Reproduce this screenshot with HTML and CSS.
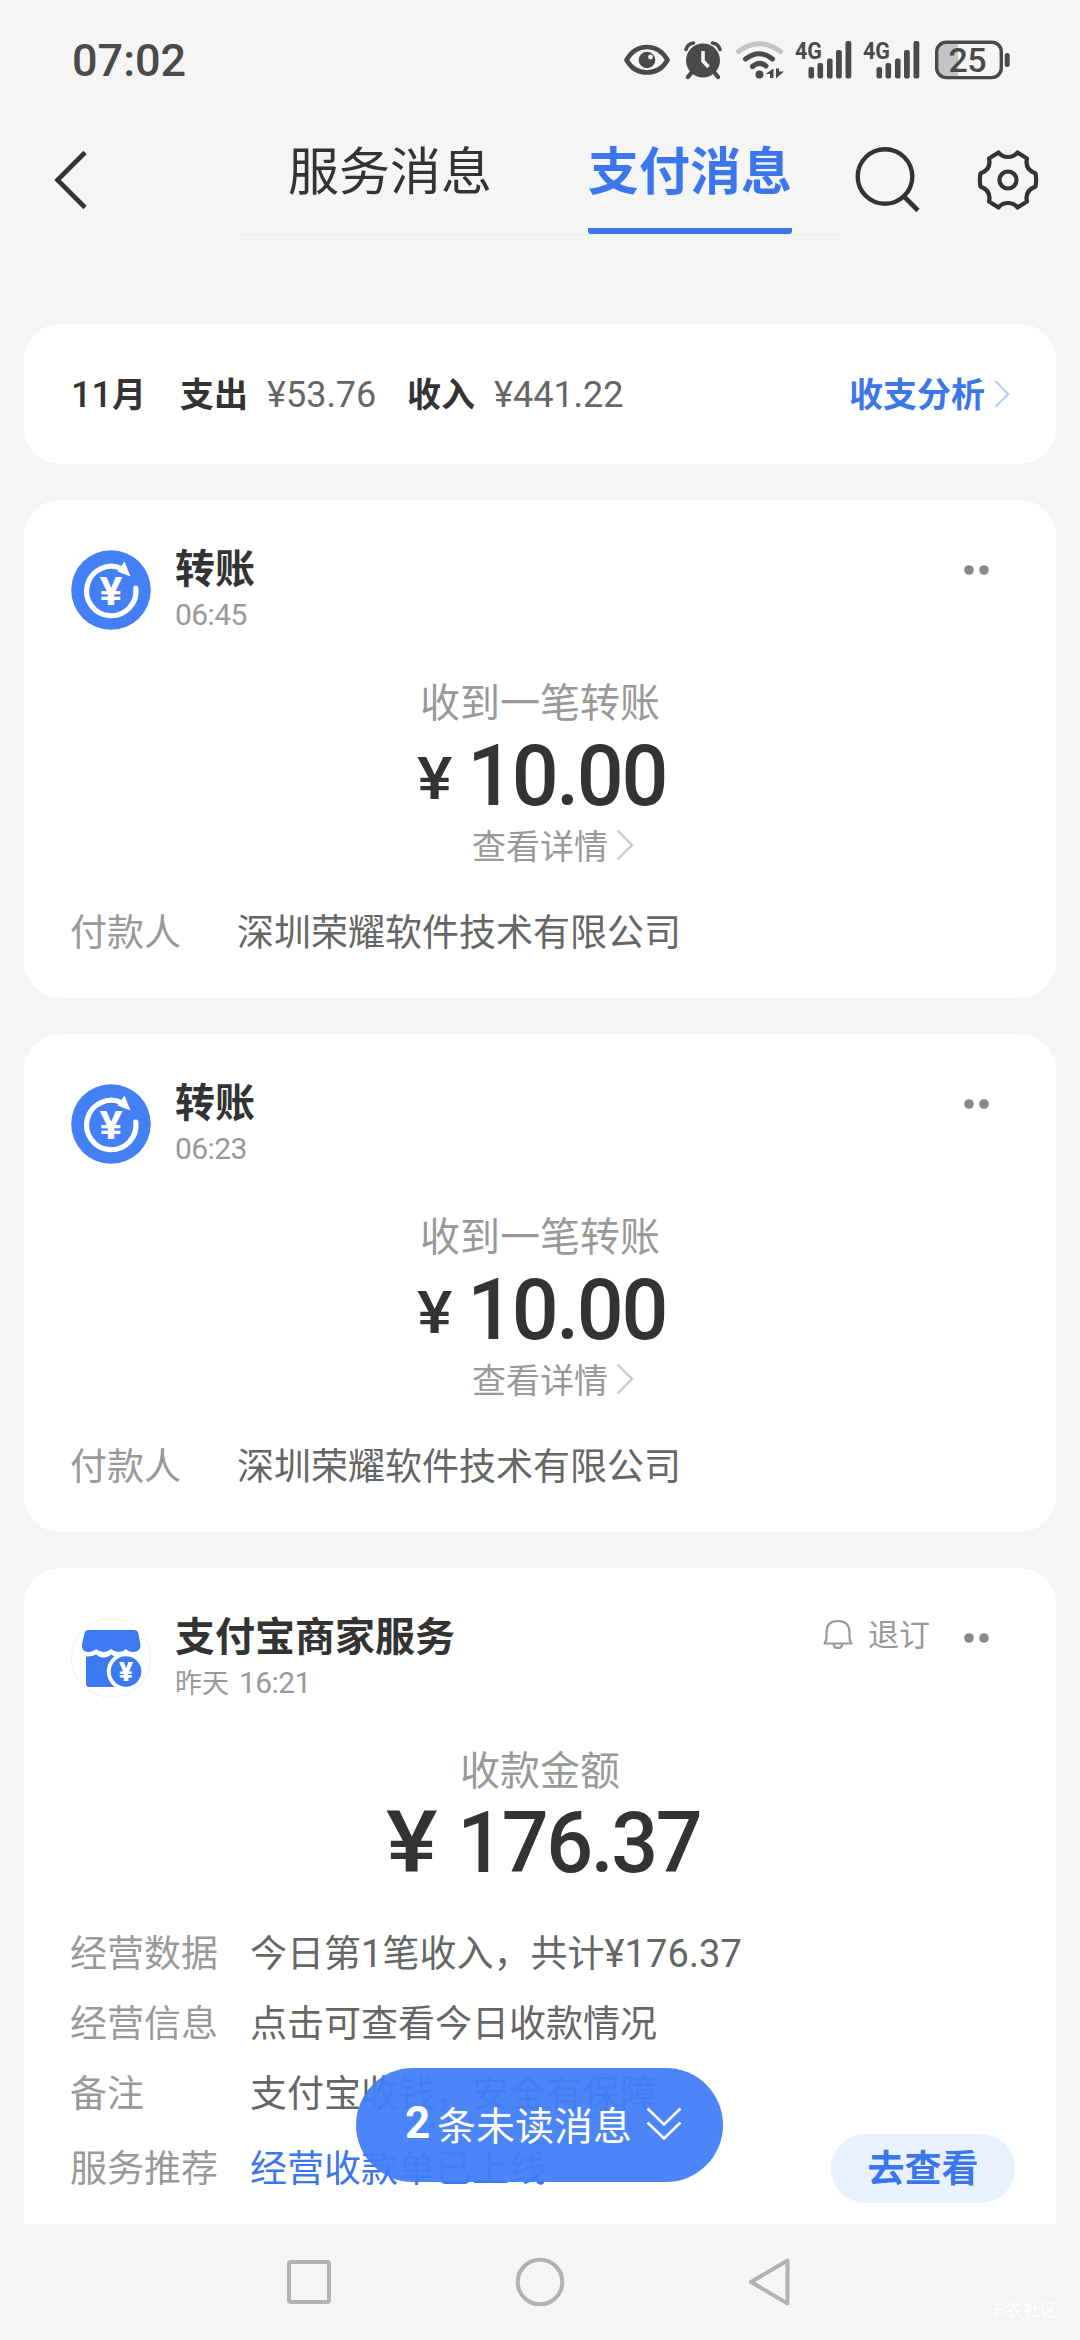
FILE: index.html
```html
<!DOCTYPE html>
<html lang="zh-CN">
<head>
<meta charset="utf-8">
<title>支付消息</title>
<link rel="stylesheet" href="styles.css">
</head>
<body>
<svg class="defs" width="0" height="0">
  <symbol id="signal" viewBox="0 0 57 40">
    <g fill="#4a4a4a">
      <rect x="13.5" y="27" width="5.6" height="11.5" rx="2"/>
      <rect x="22.5" y="23" width="5.6" height="15.5" rx="2"/>
      <rect x="32" y="18.500" width="5.600" height="20" rx="2"/>
      <rect x="41" y="10" width="5.800" height="28.500" rx="2"/>
      <rect x="50.500" y="1" width="5.800" height="37.500" rx="2"/>
    </g>
  </symbol>
  <symbol id="transfer" viewBox="0 0 80 80">
    <circle cx="40" cy="40" r="39.800" fill="#4380f5"/>
    <path d="M64.800 38A24.700 24.700 0 1 1 51 18.800" fill="none" stroke="#fff" stroke-width="5.200" stroke-linecap="round"/>
    <path d="M53.500 11.500L59.500 26.500L46.500 21.500Z" fill="#fff"/>
  </symbol>
  <symbol id="dots" viewBox="0 0 25 12">
    <circle cx="5" cy="6" r="4.800" fill="#888"/><circle cx="20" cy="6" r="4.800" fill="#888"/>
  </symbol>
  <symbol id="chevron" viewBox="0 0 18 32">
    <path d="M1.500 1.500L16 16L1.500 30.500" fill="none" stroke="currentColor" stroke-width="2.400"/>
  </symbol>
</svg>

<div class="screen">
  <header class="status">
    <span class="clock">07:02</span>
    <svg class="eye" width="46" height="32" viewBox="0 0 46 32">
      <path d="M2.500 16C7 8 14 3 23 3S39 8 43.500 16C39 24 32 28.500 23 28.500S7 24 2.500 16Z" fill="none" stroke="#4a4a4a" stroke-width="4.600" stroke-linejoin="round"/>
      <circle cx="23" cy="16" r="8.300" fill="#4a4a4a"/><circle cx="26.500" cy="13" r="2.400" fill="#f5f5f5"/>
    </svg>
    <svg class="alarm" width="38" height="38" viewBox="0 0 38 38">
      <circle cx="19" cy="19.500" r="17" fill="#4a4a4a"/>
      <path d="M2 8.500Q4 2.500 9.500 2M36 8.500Q34 2.500 28.500 2" fill="none" stroke="#4a4a4a" stroke-width="3.600" stroke-linecap="round"/>
      <path d="M8 31L4 36M30 31L34 36" stroke="#4a4a4a" stroke-width="4.400" stroke-linecap="round"/>
      <path d="M19 10V20L24.500 26" fill="none" stroke="#f5f5f5" stroke-width="3.600"/>
    </svg>
    <svg class="wifi" width="48" height="40" viewBox="0 0 48 40">
      <g fill="none" stroke-width="5" stroke-linecap="round">
        <path d="M2.500 11.500Q23.500-4 44.500 11.500" stroke="#c4c4c4"/>
        <path d="M9.500 19Q23.500 8.500 36.500 19" stroke="#4a4a4a"/>
        <path d="M16.500 26.500Q23.500 20.500 30 26" stroke="#4a4a4a"/>
      </g>
      <circle cx="23.500" cy="34.500" r="4" fill="#4a4a4a"/>
      <path d="M37.500 28.500V38H34V34H29.500ZM40 28.500H43V31.500H48L40 38.500Z" fill="#4a4a4a"/>
    </svg>
    <svg class="cell" width="57" height="40"><use href="#signal"/><text x="0" y="18.500" textLength="27" lengthAdjust="spacingAndGlyphs">4G</text></svg>
    <svg class="cell" width="57" height="40"><use href="#signal"/><text x="0" y="18.500" textLength="27" lengthAdjust="spacingAndGlyphs">4G</text></svg>
    <svg class="battery" width="77" height="40" viewBox="0 0 77 40">
      <path d="M12 2H23V37H12Q2 37 2 27V12Q2 2 12 2Z" fill="#c4c4c4"/>
      <rect x="1.700" y="2.200" width="64.600" height="35.400" rx="9.500" fill="none" stroke="#4a4a4a" stroke-width="3.400"/>
      <rect x="69.700" y="13" width="5" height="14" rx="2.500" fill="#4a4a4a"/>
      <text x="13.500" y="31.800" textLength="38">25</text>
    </svg>
  </header>

  <nav class="topbar">
    <svg class="back" width="36" height="60" viewBox="0 0 36 60"><path d="M32 2.500L4.500 30L32 57.500" fill="none" stroke="#333" stroke-width="4.600"/></svg>
    <div class="tabs">
      <div class="tab"><span>服务消息</span></div>
      <div class="tab active"><span>支付消息</span></div>
    </div>
    <svg class="search" width="66" height="68" viewBox="0 0 66 68">
      <circle cx="30" cy="30.500" r="27.300" fill="none" stroke="#333" stroke-width="4.400"/>
      <path d="M49 50.500L63 64.500" stroke="#333" stroke-width="4.600"/>
    </svg>
    <svg class="gear" width="62" height="62" viewBox="0 0 62 62">
      <path d="M12 9.500L21.500 3.500Q25 8 31 8T40.500 3.500L50 9.500C48 18 52 22 58.500 24.500Q59.800 31 58.500 37.500C52 40 48 44 50 52.500L40.500 58.500Q37 54 31 54T21.500 58.500L12 52.500C14 44 10 40 3.500 37.500Q2.200 31 3.500 24.500C10 22 14 18 12 9.500Z" fill="none" stroke="#333" stroke-width="4.200" stroke-linejoin="round"/>
      <circle cx="31" cy="31" r="8.500" fill="none" stroke="#333" stroke-width="4.200"/>
    </svg>
  </nav>

  <main class="feed">
    <section class="card summary">
      <b class="month"><span class="num">11</span>月</b>
      <b class="out">支出</b><span class="num sum">¥53.76</span>
      <b class="in">收入</b><span class="num sum">¥441.22</span>
      <a class="analysis"><span>收支分析</span><svg width="16" height="30"><use href="#chevron"/></svg></a>
    </section>

    <article class="card message">
      <div class="head">
        <svg class="avatar" width="80" height="80"><use href="#transfer"/><text x="28.500" y="55" textLength="23" lengthAdjust="spacingAndGlyphs">¥</text></svg>
        <div class="who"><h2>转账</h2><p><span class="num">06:45</span></p></div>
        <svg class="more" width="25" height="12"><use href="#dots"/></svg>
      </div>
      <p class="label">收到一笔转账</p>
      <p class="amount"><span class="yen small">¥</span><span class="digits">10.00</span></p>
      <p class="detail"><span>查看详情</span><svg width="18" height="32"><use href="#chevron"/></svg></p>
      <div class="row payer"><span class="key">付款人</span><span>深圳荣耀软件技术有限公司</span></div>
    </article>

    <article class="card message">
      <div class="head">
        <svg class="avatar" width="80" height="80"><use href="#transfer"/><text x="28.500" y="55" textLength="23" lengthAdjust="spacingAndGlyphs">¥</text></svg>
        <div class="who"><h2>转账</h2><p><span class="num">06:23</span></p></div>
        <svg class="more" width="25" height="12"><use href="#dots"/></svg>
      </div>
      <p class="label">收到一笔转账</p>
      <p class="amount"><span class="yen small">¥</span><span class="digits">10.00</span></p>
      <p class="detail"><span>查看详情</span><svg width="18" height="32"><use href="#chevron"/></svg></p>
      <div class="row payer"><span class="key">付款人</span><span>深圳荣耀软件技术有限公司</span></div>
    </article>

    <article class="card message merchant">
      <div class="head">
        <svg class="shop" width="80" height="80" viewBox="0 0 80 80">
          <circle cx="40" cy="40" r="39.500" fill="#fff" stroke="#f1f1f1"/>
          <path d="M17.500 12H63.500Q66.500 12 67.300 15L69.500 27Q69.500 34 62 34Q57.500 34 55 31Q51.500 34 47.500 34Q43.500 34 40 31Q36.500 34 32.500 34Q28.500 34 25 31Q22 34 17.500 34Q10.500 34 10.800 27L13.500 15Q14.500 12 17.500 12Z" fill="#3c79f3"/>
          <path d="M15 38.500Q21 39 25 36.500Q28.500 39.500 32.500 39.500Q37 39.500 40 36.500Q43 39 48 38.500V69H18Q15 69 15 66Z" fill="#3c79f3"/>
          <circle cx="55" cy="53.500" r="19.200" fill="#fff"/>
          <circle cx="55" cy="53.500" r="15.300" fill="#3c79f3"/>
          <text x="48" y="62.500" textLength="14" lengthAdjust="spacingAndGlyphs">¥</text>
        </svg>
        <div class="who"><h2>支付宝商家服务</h2><p>昨天<span class="num gap">16:21</span></p></div>
        <div class="unsub">
          <svg width="30" height="32" viewBox="0 0 30 32"><path d="M1.500 24.500Q3.500 22 3.500 18V13.500Q3.500 2 15 2T26.500 13.500V18Q26.500 22 28.500 24.500Z" fill="none" stroke="#999" stroke-width="2.200" stroke-linejoin="round"/><path d="M10.500 25Q11 29 15 29T19.500 25" fill="none" stroke="#999" stroke-width="2.200"/></svg>
          <span>退订</span>
        </div>
        <svg class="more" width="25" height="12"><use href="#dots"/></svg>
      </div>
      <p class="label">收款金额</p>
      <p class="amount"><span class="yen">¥</span><span class="digits">176.37</span></p>
      <div class="rows">
        <div class="row"><span class="key">经营数据</span><span>今日第<span class="num">1</span>笔收入，共计<span class="num">¥176.37</span></span></div>
        <div class="row"><span class="key">经营信息</span><span>点击可查看今日收款情况</span></div>
        <div class="row"><span class="key">备注</span><span>支付宝收钱，安全有保障</span></div>
        <div class="row promo"><span class="key">服务推荐</span><a>经营收款单已上线</a><button class="go">去查看</button></div>
      </div>
    </article>
    <div class="unread"><b>2</b><span>条未读消息</span>
      <svg width="36" height="36" viewBox="0 0 36 36"><path d="M1.500 2.500L18 18.500L34.500 2.500M1.500 16.500L18 32.500L34.500 16.500" fill="none" stroke="#fff" stroke-width="2.600"/></svg>
    </div>
  </main>

  <footer class="navbar">
    <svg width="46" height="50" viewBox="0 0 46 50"><rect x="3" y="5" width="40" height="40" rx="2" fill="none" stroke="#b2b2b2" stroke-width="4"/></svg>
    <svg width="50" height="50" viewBox="0 0 50 50"><circle cx="25" cy="25" r="22.300" fill="none" stroke="#b2b2b2" stroke-width="4"/></svg>
    <svg width="46" height="50" viewBox="0 0 46 50"><path d="M3 25L39.500 3.500V46.500Z" fill="none" stroke="#b2b2b2" stroke-width="4" stroke-linejoin="round"/></svg>
    <span class="stamp">卡农社区</span>
  </footer>
</div>
</body>
</html>
```
FILE: styles.css
```css
* { box-sizing: border-box; }
body { margin: 0; background: #f5f5f5; color: #333; font-family: "Noto Sans CJK SC", Roboto, sans-serif; }
h2, p { margin: 0; }
svg { display: block; flex: none; overflow: visible; }
svg text { font-family: Roboto, sans-serif; }
.defs { position: absolute; }
.num { font-family: Roboto, sans-serif; line-height: 1; }
.screen { width: 1080px; height: 2340px; display: flex; flex-direction: column; overflow: hidden; }

.status { height: 120px; display: flex; align-items: center; padding-left: 72px; color: #4a4a4a; }
.clock { width: 552px; font: 500 45px/1 Roboto, sans-serif; }
.alarm { margin-left: 14px; }
.wifi { margin-left: 14px; }
.cell { margin-left: 11px; }
.cell text { font-size: 24px; font-weight: 700; fill: #4a4a4a; }
.battery { margin-left: 15px; }
.battery text { font-size: 34px; font-weight: 500; fill: #4a4a4a; }

.topbar { height: 120px; display: flex; align-items: center; padding-left: 53px; }
.tabs { display: flex; width: 600px; height: 115px; align-self: flex-start; margin-left: 151px; border-bottom: 1px solid #eee; }
.tab { width: 300px; display: flex; justify-content: center; font-size: 51px; line-height: 97px; }
.tab span { height: 114px; }
.tab.active span { color: #3b76ea; font-weight: 700; border-bottom: 6px solid #3b76ea; border-radius: 3px; }
.search { margin-left: 15px; }
.gear { margin-left: 56px; }

.feed { position: relative; height: 1984px; padding: 84px 24px 0; overflow: hidden; display: flex; flex-direction: column; gap: 36px; }
.card { flex: none; background: #fff; border-radius: 36px; }
.summary { height: 140px; padding: 0 46px 2px 47px; display: flex; align-items: center; font-size: 34px; line-height: 50px; }
.summary b { font-weight: 700; }
.month { width: 109px; }
.month .num { font-size: 36px; font-weight: 500; }
.out, .in { width: 87px; }
.sum { width: 140px; padding-top: 3px; font-size: 36px; color: #666; }
.analysis { margin-left: auto; display: flex; align-items: center; gap: 9px; color: #3b76ea; font-weight: 700; }
.analysis svg { color: #b4d0f7; margin-top: 2px; }

.message { height: 498px; padding: 50px 48px 0; }
.head { display: flex; height: 80px; margin-left: -1.500px; }
.avatar text { font-size: 38px; font-weight: 700; fill: #fff; }
.shop text { font-size: 25px; font-weight: 900; fill: #fff; }
.who { flex: 1; margin-left: 24.500px; }
.who h2 { font-size: 40px; line-height: 48px; margin-top: -8px; font-weight: 700; }
.who p { font-size: 27px; line-height: 36px; margin-top: 6px; color: #999; }
.who .num { font-size: 30px; letter-spacing: -0.600px; }
.who .gap { margin-left: 10px; }
.more { margin: 14px 19px 0 0; }
.unsub { display: flex; height: 36px; margin: -1px 34px 0 0; gap: 15px; align-items: center; font-size: 31px; color: #999; }
.unsub span { margin-top: -5px; }
.label { margin-top: 48px; height: 44px; font-size: 40px; line-height: 44px; text-align: center; color: #999; }
.amount { margin-top: 11px; height: 86px; display: flex; justify-content: center; font: 500 86px/86px Roboto, sans-serif; letter-spacing: -2.500px; }
.digits { transform: scaleX(0.96); transform-origin: 100% 50%; }
.yen { margin-right: 18px; transform: scaleX(1.130); transform-origin: 0 50%; }
.yen.small { font-size: 59px; margin: 0 14px 0 3px; line-height: 91px; }
.merchant .amount { padding-left: 3px; line-height: 84px; }
.merchant .digits { margin-right: -3px; }
.detail { margin-top: 7px; height: 38px; display: flex; justify-content: center; align-items: center; font-size: 34px; color: #999; }
.detail span { margin-top: -2px; }
.detail svg { margin: 0 -26px 0 8px; color: #ccc; }
.row { display: flex; align-items: center; height: 70px; font-size: 37px; line-height: 50px; color: #666; }
.row .num { font-size: 38px; letter-spacing: 0.100px; }
.key { width: 180px; margin-left: -2px; color: #999; }
.payer { margin-top: 31px; }
.payer .key { width: 167px; }
.merchant { height: 700px; }
.rows { margin-top: 29px; }
.promo { margin-top: 5px; }
.row a { color: #3b76ea; }
.go { margin: 5px -7px 0 auto; width: 184px; height: 69px; border: 0; border-radius: 35px; padding: 0 0 6px; background: #e8f1fd; color: #3b76ea; font: 700 37px/60px "Noto Sans CJK SC", sans-serif; }

.unread { position: absolute; left: 356px; top: 1828px; width: 367px; height: 114px; border-radius: 57px; display: flex; align-items: center; padding: 0 0 4px 49px; background: rgba(65, 126, 248, 0.95); color: #fff; font-size: 39px; line-height: 58px; }
.unread b { font: 700 44px/60px Roboto, sans-serif; width: 32px; }
.unread svg { margin: 2px 0 0 14px; }

.navbar { position: relative; height: 116px; display: flex; align-items: center; justify-content: center; gap: 183px; }
.stamp { position: absolute; right: 22px; bottom: 19px; font-size: 17.500px; line-height: 24px; color: #fff; }
```
